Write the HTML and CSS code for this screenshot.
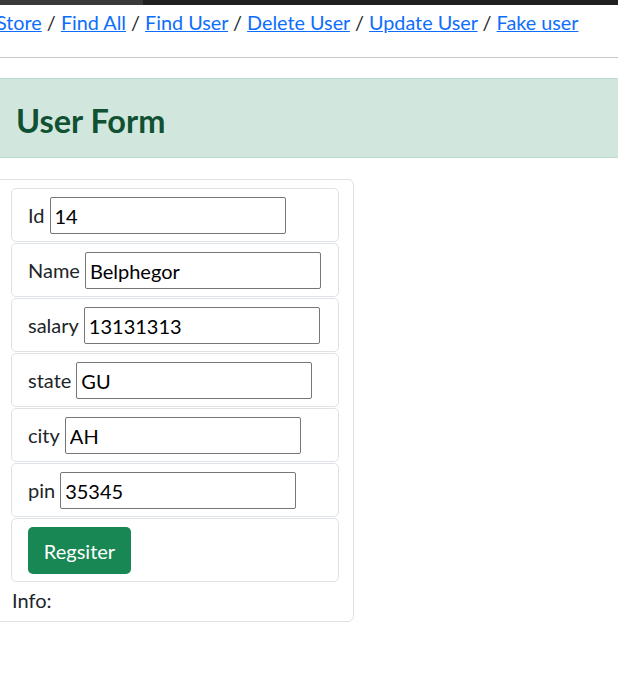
FILE: index.html
```html
<!DOCTYPE html>
<html lang="en">
<head>
<meta charset="utf-8">
<title>User Form</title>
<link rel="stylesheet" href="styles.css">
</head>
<body>
<div class="topbar"></div>
<div class="page">
  <nav class="nav">
    <a href="#">Store</a> / <a href="#">Find All</a> / <a href="#">Find User</a> / <a href="#">Delete User</a> / <a href="#">Update User</a> / <a href="#">Fake user</a>
  </nav>
  <hr class="rule">
  <div class="banner"><h3 class="banner-title">User Form</h3></div>
  <div class="card">
    <div class="item"><label>Id</label><input class="field" type="text" value="14"></div>
    <div class="item"><label>Name</label><input class="field" type="text" value="Belphegor"></div>
    <div class="item"><label>salary</label><input class="field" type="text" value="13131313"></div>
    <div class="item"><label>state</label><input class="field" type="text" value="GU"></div>
    <div class="item"><label>city</label><input class="field" type="text" value="AH"></div>
    <div class="item"><label>pin</label><input class="field" type="text" value="35345"></div>
    <div class="item item-btn"><button class="btn" type="button">Regsiter</button></div>
    <div class="info">Info:</div>
  </div>
</div>
</body>
</html>
```
FILE: styles.css
```css
html, body {
  margin: 0;
  padding: 0;
  overflow: hidden;
  background: #fff;
}
body {
  font-family: Lato, "Open Sans", sans-serif;
  font-size: 20px;
  color: #212529;
}
.topbar {
  height: 5px;
  background: linear-gradient(to right, #3a3a3a 0, #3a3a3a 143px, #202020 143px);
}
.page {
  margin-left: -4px;
  width: 700px;
}
.nav {
  line-height: 30px;
  padding-top: 2px;
  white-space: nowrap;
  font-size: 19.8px;
}
.nav a {
  color: #0d6efd;
  text-decoration: underline;
}
.rule {
  margin: 20px 0 20px;
  border: 0;
  border-top: 1px solid #c8c8c8;
}
.banner {
  height: 80px;
  box-sizing: border-box;
  background: #d1e7dd;
  border: 1px solid #badbcc;
  display: flex;
  align-items: center;
  padding-left: 20px;
  margin-left: -20px;
}
.banner-title {
  margin: 0;
  font-size: 32.5px;
  font-weight: 700;
  color: #0f5132;
  padding: 4px 0 0 19px;
}
.card {
  margin-top: 21px;
  width: 358px;
  box-sizing: border-box;
  border: 1px solid #dee2e6;
  border-radius: 6px;
  padding: 8px 14px 8px 14px;
}
.item {
  height: 54px;
  box-sizing: border-box;
  border: 1px solid #dee2e6;
  border-radius: 5px;
  margin-bottom: 1px;
  padding: 8px 16px 0;
  display: flex;
  align-items: flex-start;
  gap: 5px;
}
.item label {
  line-height: 37px;
}
.field {
  width: 236px;
  height: 37px;
  box-sizing: border-box;
  border: 1px solid #767676;
  border-radius: 2px;
  padding: 0 4px;
  font-family: inherit;
  font-size: 20px;
  color: #000;
  background: #fff;
}
.item-btn {
  height: 64px;
}
.btn {
  height: 47px;
  width: 103px;
  background: #198754;
  border: 0;
  border-radius: 5px;
  color: #fff;
  font-family: inherit;
  font-size: 20px;
  padding: 0;
}
.info {
  line-height: 26px;
  padding-top: 4px;
  margin-left: 1px;
}
```
